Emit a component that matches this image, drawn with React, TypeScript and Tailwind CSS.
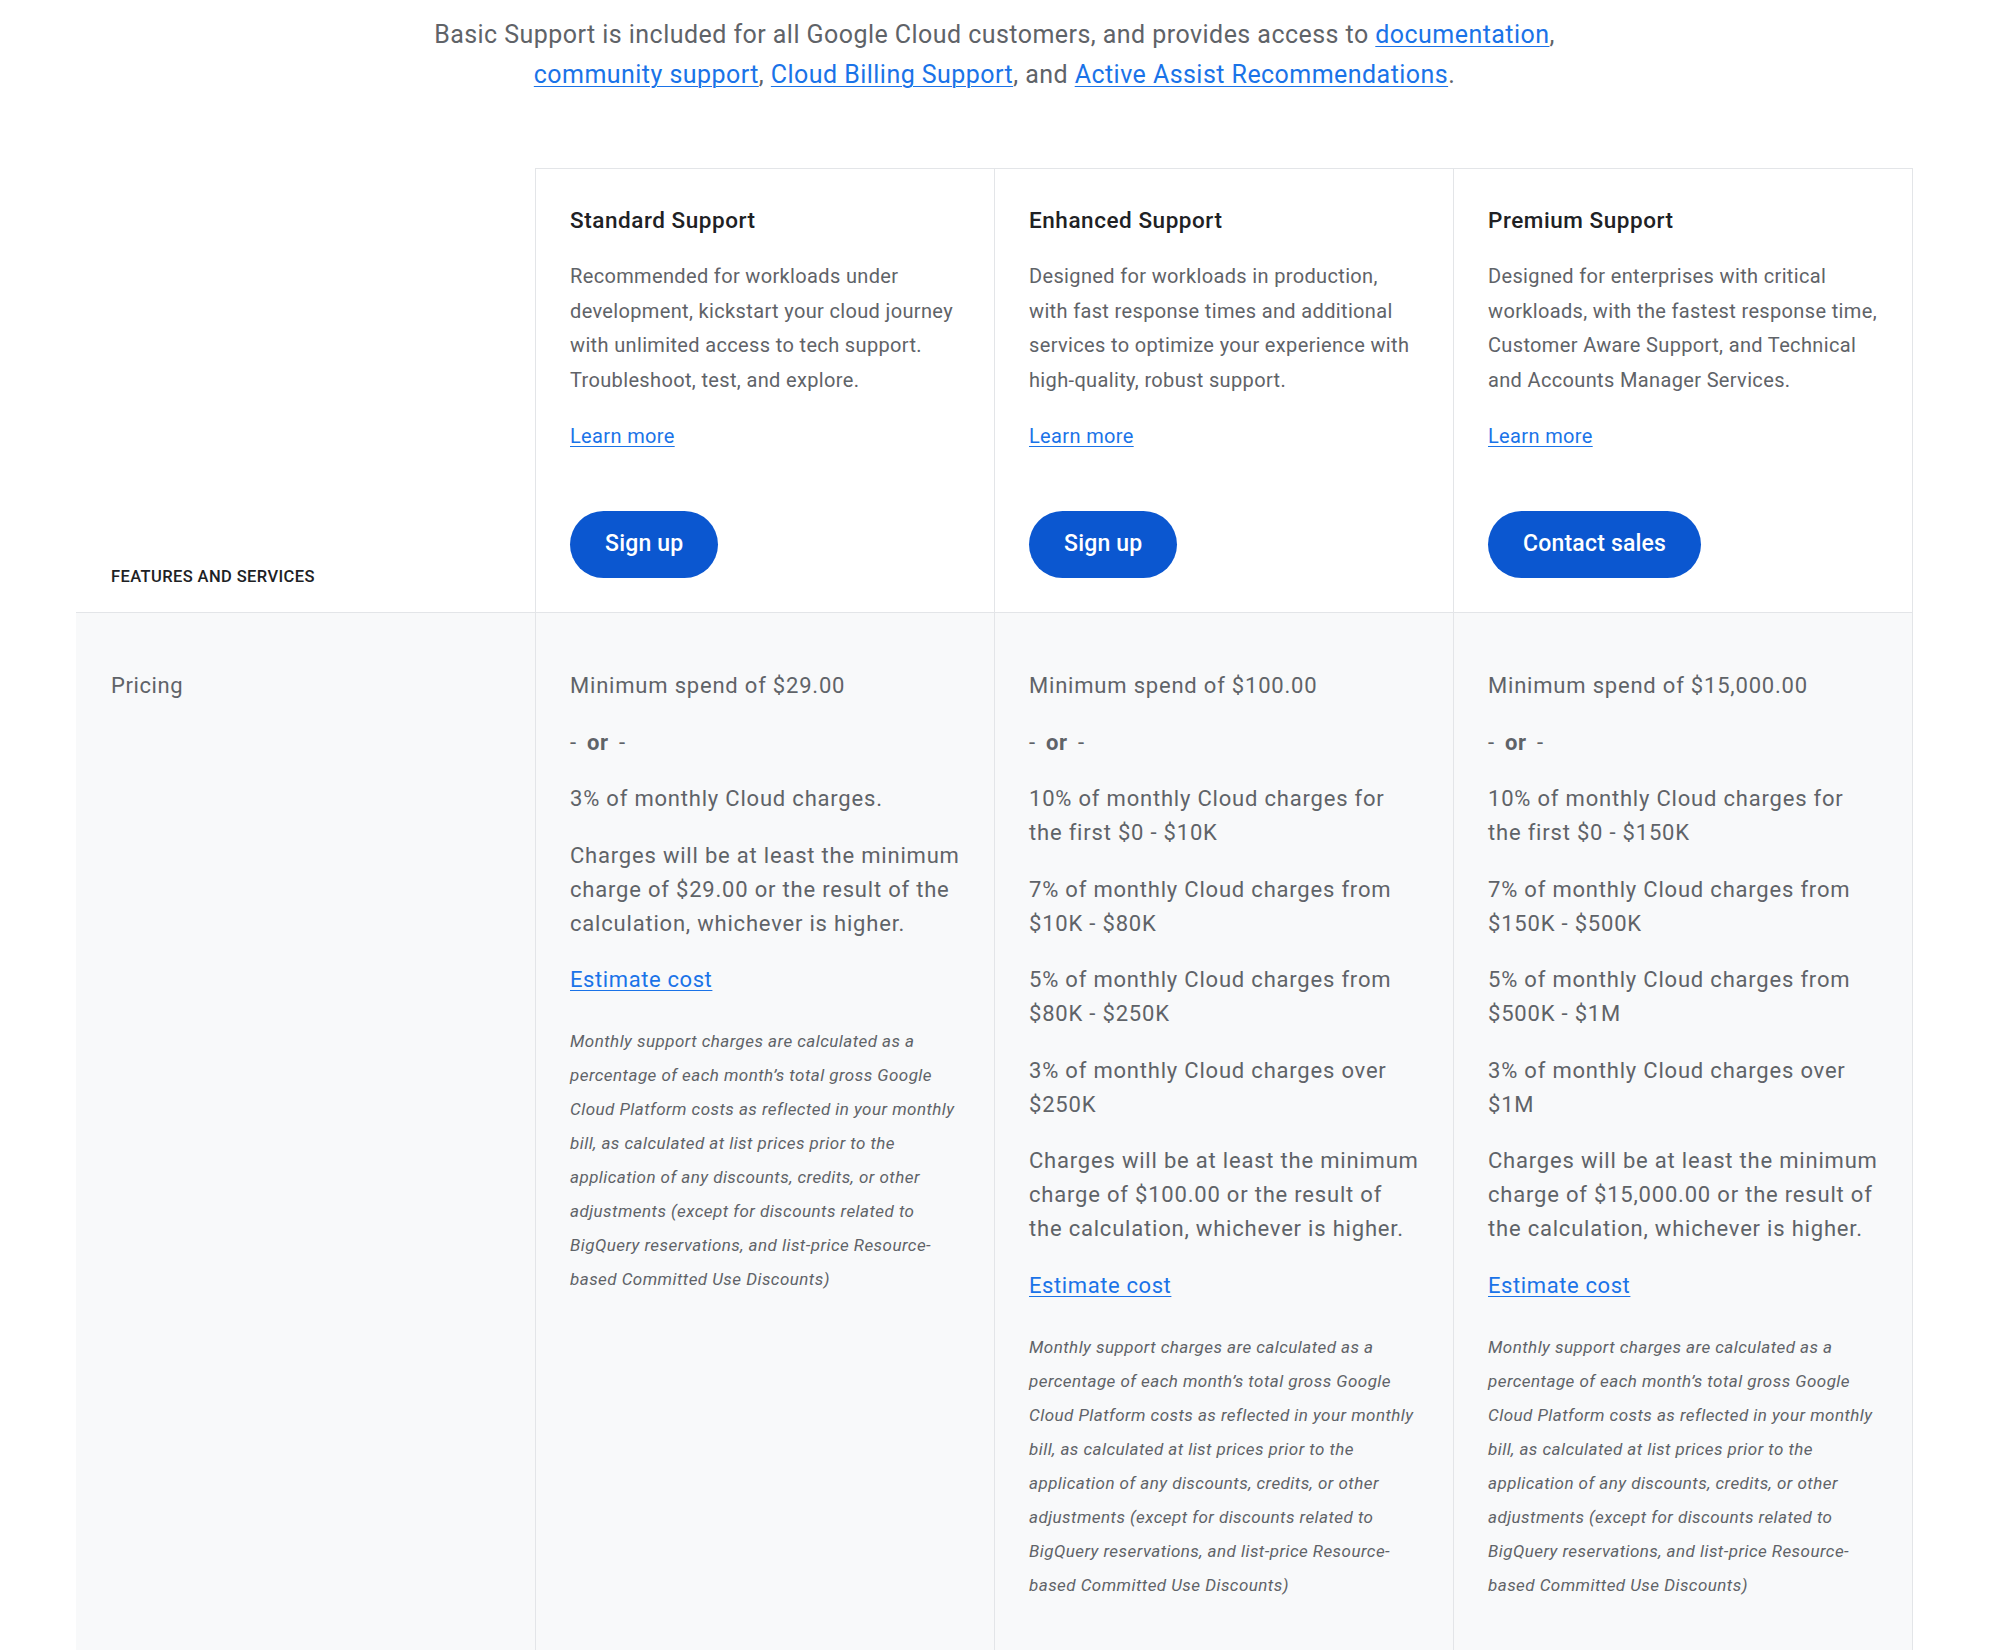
import React from "react";

type Plan = {
  title: string;
  desc: string;
  cta: string;
  min: string;
  tiers: string[];
  charge: string;
};

const plans: Plan[] = [
  {
    title: "Standard Support",
    desc: "Recommended for workloads under development, kickstart your cloud journey with unlimited access to tech support. Troubleshoot, test, and explore.",
    cta: "Sign up",
    min: "Minimum spend of $29.00",
    tiers: ["3% of monthly Cloud charges."],
    charge: "Charges will be at least the minimum charge of $29.00 or the result of the calculation, whichever is higher.",
  },
  {
    title: "Enhanced Support",
    desc: "Designed for workloads in production, with fast response times and additional services to optimize your experience with high-quality, robust support.",
    cta: "Sign up",
    min: "Minimum spend of $100.00",
    tiers: [
      "10% of monthly Cloud charges for the first $0 - $10K",
      "7% of monthly Cloud charges from $10K - $80K",
      "5% of monthly Cloud charges from $80K - $250K",
      "3% of monthly Cloud charges over $250K",
    ],
    charge: "Charges will be at least the minimum charge of $100.00 or the result of the calculation, whichever is higher.",
  },
  {
    title: "Premium Support",
    desc: "Designed for enterprises with critical workloads, with the fastest response time, Customer Aware Support, and Technical and Accounts Manager Services.",
    cta: "Contact sales",
    min: "Minimum spend of $15,000.00",
    tiers: [
      "10% of monthly Cloud charges for the first $0 - $150K",
      "7% of monthly Cloud charges from $150K - $500K",
      "5% of monthly Cloud charges from $500K - $1M",
      "3% of monthly Cloud charges over $1M",
    ],
    charge: "Charges will be at least the minimum charge of $15,000.00 or the result of the calculation, whichever is higher.",
  },
];

const finePrint =
  "Monthly support charges are calculated as a percentage of each month\u2019s total gross Google Cloud Platform costs as reflected in your monthly bill, as calculated at list prices prior to the application of any discounts, credits, or other adjustments (except for discounts related to BigQuery reservations, and list-price Resource-based Committed Use Discounts)";

function Link({ children, className = "" }: { children: React.ReactNode; className?: string }) {
  return (
    <a href="#" className={"text-[#1a73e8] underline underline-offset-[3px] decoration-1 " + className}>
      {children}
    </a>
  );
}

export default function App() {
  return (
    <div className="h-[1650px] overflow-hidden bg-white [font-family:Roboto,'Liberation_Sans',sans-serif] text-[#5f6368]">
      <div className="ml-[76px] w-[1837px]">
        <p className="pt-[15px] text-center text-[25px] leading-[40px] tracking-[0.45px] text-[#5f6368]">
          Basic Support is included for all Google Cloud customers, and provides access to{" "}
          <Link>documentation</Link>,
          <br />
          <Link>community support</Link>, <Link>Cloud Billing Support</Link>, and{" "}
          <Link>Active Assist Recommendations</Link>.
        </p>

        <div className="mt-[73px] grid grid-cols-[459px_459px_459px_460px]">
          {/* Header row */}
          <div className="flex items-end border-b border-[#e3e5e8] bg-white pl-[35px] pb-[25px]">
            <span className="text-[16.5px] font-medium uppercase leading-[20px] tracking-[0.4px] text-[#202124]">
              Features and services
            </span>
          </div>
          {plans.map((p, i) => (
            <div
              key={p.title}
              className={
                "border-t border-l border-b border-[#e3e5e8] bg-white pl-[34px] pr-[33px] pt-[35px] pb-[34px] " +
                (i === plans.length - 1 ? "border-r" : "")
              }
            >
              <h3 className="text-[22.5px] font-medium leading-[32px] tracking-[0.55px] text-[#202124]">{p.title}</h3>
              <p className="mt-[23px] text-[20px] leading-[34.5px] tracking-[0.35px] text-[#5f6368]">{p.desc}</p>
              <div className="mt-[22px] text-[20px] leading-[34px] tracking-[0.35px]">
                <Link>Learn more</Link>
              </div>
              <button className="mt-[58px] flex h-[67px] items-center rounded-full bg-[#0b57d0] px-[35px] text-[23px] font-medium tracking-[0.2px] text-white">
                {p.cta}
              </button>
            </div>
          ))}

          {/* Pricing row */}
          <div className="bg-[#f8f9fa] pl-[35px] pt-[56px] text-[22px] leading-[34px] tracking-[0.6px] text-[#5f6368]">
            Pricing
          </div>
          {plans.map((p, i) => (
            <div
              key={p.title + "-price"}
              className={
                "border-l border-[#e3e5e8] bg-[#f8f9fa] pl-[34px] pr-[33px] pt-[56px] pb-[56px] " +
                (i === plans.length - 1 ? "border-r" : "")
              }
            >
              <div className="flex flex-col gap-[22.5px] text-[22px] leading-[34px] tracking-[0.8px] text-[#5f6368]">
                <p>{p.min}</p>
                <p>
                  -<span className="px-[10px] font-bold">or</span>-
                </p>
                {p.tiers.map((t) => (
                  <p key={t}>{t}</p>
                ))}
                <p>{p.charge}</p>
                <p className="tracking-[0.6px]">
                  <Link>Estimate cost</Link>
                </p>
              </div>
              <p className="mt-[27px] text-[17px] italic leading-[34px] tracking-[0.45px] text-[#5f6368]">{finePrint}</p>
            </div>
          ))}
        </div>
      </div>
    </div>
  );
}
